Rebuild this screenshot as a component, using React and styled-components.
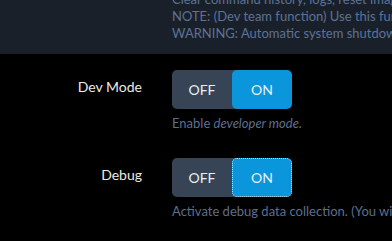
import React from "react";
import styled, { createGlobalStyle } from "styled-components";

const GlobalStyle = createGlobalStyle`
  html, body {
    margin: 0;
    padding: 0;
    background: #000;
  }
  body {
    font-family: Lato, "Open Sans", sans-serif;
    overflow: hidden;
  }
`;

const Page = styled.div`
  width: 392px;
  height: 241px;
  overflow: hidden;
  background: #000;
`;

const NoticePanel = styled.div`
  height: 54px;
  overflow: hidden;
  background: #1a2029;
  padding-left: 172px;
  box-sizing: border-box;
`;

const NoticeLines = styled.div`
  margin-top: -9.5px;
  font-size: 13px;
  line-height: 17px;
  color: #5b7398;
  white-space: nowrap;
`;

const Settings = styled.div`
  display: grid;
  grid-template-columns: 142px 1fr;
  column-gap: 30px;
  row-gap: 26px;
  padding-top: 16px;
`;

const Label = styled.div`
  text-align: right;
  color: #ecebe6;
  font-size: 14px;
  line-height: 17px;
  padding-top: 8px;
  white-space: nowrap;
`;

const Field = styled.div`
  display: flex;
  flex-direction: column;
  align-items: flex-start;
  gap: 6px;
  min-width: 0;
`;

const Toggle = styled.div`
  display: flex;
  width: 120px;
  height: 39px;
  border-radius: 5px;
  overflow: hidden;
  background: #364455;
`;

const ToggleButton = styled.button`
  flex: 1;
  border: none;
  margin: 0;
  padding: 0;
  font-family: Lato, "Open Sans", sans-serif;
  font-size: 14px;
  color: #e9eef3;
  background: ${p => (p.$active ? "#0b96dc" : "transparent")};
  border-radius: ${p => (p.$active ? "5px" : "0")};
  outline: ${p => (p.$focused ? "1px dotted #d8d8d8" : "none")};
  outline-offset: -1px;
  cursor: pointer;
`;

const Help = styled.div`
  font-size: 13px;
  line-height: 17px;
  color: #5c6f8f;
  white-space: nowrap;

  em {
    font-style: italic;
  }
`;

const SwitchRow = ({ label, help, focused }) => (
  <>
    <Label>{label}</Label>
    <Field>
      <Toggle>
        <ToggleButton>OFF</ToggleButton>
        <ToggleButton $active $focused={focused}>
          ON
        </ToggleButton>
      </Toggle>
      <Help>{help}</Help>
    </Field>
  </>
);

export default function App() {
  return (
    <Page>
      <GlobalStyle />
      <NoticePanel>
        <NoticeLines>
          <div>Clear command history, logs, reset images and settings.</div>
          <div>NOTE: (Dev team function) Use this function with care.</div>
          <div>WARNING: Automatic system shutdown will follow.</div>
        </NoticeLines>
      </NoticePanel>
      <Settings>
        <SwitchRow
          label="Dev Mode"
          help={
            <>
              Enable <em>developer mode.</em>
            </>
          }
        />
        <SwitchRow
          label="Debug"
          focused
          help="Activate debug data collection. (You will need to restart.)"
        />
      </Settings>
    </Page>
  );
}
